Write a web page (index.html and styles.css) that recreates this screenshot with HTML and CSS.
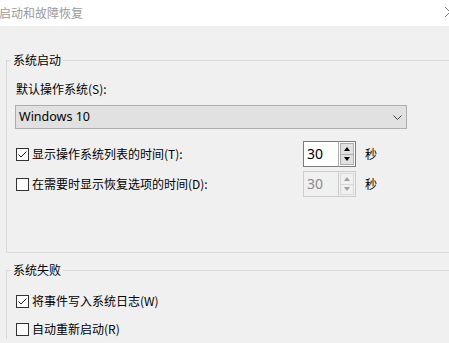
FILE: index.html
```html
<!DOCTYPE html>
<html lang="zh-CN">
<head>
<meta charset="utf-8">
<title>启动和故障恢复</title>
<link rel="stylesheet" href="styles.css">
</head>
<body>
<div class="window">
  <div class="titlebar">
    <span class="title">启动和故障恢复</span>
    <svg class="close" width="12" height="12" viewBox="0 0 12 12"><path d="M1 1L11 11M11 1L1 11" stroke="#7a7a7a" stroke-width="1" fill="none"/></svg>
  </div>
  <div class="main">
    <fieldset class="group group-start">
      <legend class="legend">系统启动</legend>
      <div class="group-body">
        <div class="field-label">默认操作系统(S):</div>
        <div class="select">
          <span class="select-text">Windows 10</span>
          <svg class="chevron" width="9" height="5" viewBox="0 0 9 5"><path d="M0.5 0.5L4.5 4.5L8.5 0.5" stroke="#444" stroke-width="1" fill="none"/></svg>
        </div>
        <div class="timer-grid">
          <label class="check">
            <span class="box"><svg width="11" height="11" viewBox="0 0 11 11"><path d="M1.5 5.5L4 8L9.5 2.5" stroke="#222" stroke-width="1" fill="none"/></svg></span>
            <span class="check-text">显示操作系统列表的时间(T):</span>
          </label>
          <div class="spin">
            <span class="spin-field">30</span>
            <span class="spin-btns">
              <span class="spin-btn"><span class="arrow-up"></span></span>
              <span class="spin-btn"><span class="arrow-down"></span></span>
            </span>
          </div>
          <span class="unit">秒</span>

          <label class="check">
            <span class="box"></span>
            <span class="check-text">在需要时显示恢复选项的时间(D):</span>
          </label>
          <div class="spin spin-disabled">
            <span class="spin-field">30</span>
            <span class="spin-btns">
              <span class="spin-btn"><span class="arrow-up"></span></span>
              <span class="spin-btn"><span class="arrow-down"></span></span>
            </span>
          </div>
          <span class="unit">秒</span>
        </div>
      </div>
    </fieldset>
    <fieldset class="group group-fail">
      <legend class="legend">系统失败</legend>
      <div class="group-body fail-body">
        <label class="check row">
          <span class="box"><svg width="11" height="11" viewBox="0 0 11 11"><path d="M1.5 5.5L4 8L9.5 2.5" stroke="#222" stroke-width="1" fill="none"/></svg></span>
          <span class="check-text">将事件写入系统日志(W)</span>
        </label>
        <label class="check row">
          <span class="box"></span>
          <span class="check-text">自动重新启动(R)</span>
        </label>
      </div>
    </fieldset>
  </div>
</div>
</body>
</html>
```
FILE: styles.css
```css
html, body {
  margin: 0;
  padding: 0;
}
body {
  width: 449px;
  height: 343px;
  overflow: hidden;
  background: #f0f0f0;
  font-family: "Noto Sans CJK SC", "Noto Sans", sans-serif;
  font-size: 12px;
  line-height: 16px;
  color: #000;
}
.window {
  width: 449px;
  height: 343px;
  overflow: hidden;
}
.titlebar {
  height: 26px;
  background: #fff;
  display: flex;
  align-items: center;
  justify-content: space-between;
}
.title {
  color: #9a9a9a;
  font-size: 12px;
  margin-left: -1px;
  margin-top: -1px;
}
.close {
  margin-right: -7px;
  margin-top: -3px;
  flex: none;
}
.main {
  padding: 26px 0 0 6px;
}
.group {
  margin: 0;
  padding: 0;
  min-width: 0;
  border: 1px solid #d9d9d9;
  border-right: none;
}
.legend {
  margin-left: 4px;
  padding: 0 2px;
  line-height: 16px;
}
.group-body {
  padding-left: 9px;
}
.group-start .group-body {
  padding-top: 13px;
  padding-bottom: 55px;
}
.group-fail {
  margin-top: 9px;
  border-bottom: none;
}
.field-label {
  height: 16px;
}
.select {
  margin-top: 8px;
  margin-left: -1px;
  width: 392px;
  height: 24px;
  box-sizing: border-box;
  border: 1px solid #adadad;
  background: #e1e1e1;
  display: flex;
  align-items: center;
  justify-content: space-between;
  padding: 0 4px 0 3px;
}
.select-text {
  font-family: "Noto Sans", sans-serif;
  font-size: 12.5px;
  color: #000;
}
.timer-grid {
  margin-top: 12px;
  display: grid;
  grid-template-columns: 278px 53px auto;
  grid-auto-rows: 26px;
  row-gap: 4px;
  column-gap: 9px;
  align-items: center;
}
.check {
  display: flex;
  align-items: center;
  gap: 3px;
}
.box {
  width: 13px;
  height: 13px;
  box-sizing: border-box;
  border: 1px solid #333;
  background: #fff;
  display: flex;
  align-items: center;
  justify-content: center;
  flex: none;
}
.box svg {
  display: block;
}
.check-text {
  white-space: nowrap;
}
.spin {
  display: flex;
  height: 26px;
  width: 53px;
  box-sizing: border-box;
}
.spin-field {
  width: 35px;
  box-sizing: border-box;
  border: 1px solid #7a7a7a;
  border-right: none;
  background: #fff;
  font-family: "Noto Sans", sans-serif;
  font-size: 14px;
  line-height: 22px;
  padding: 1px 0 0 3px;
}
.spin-btns {
  width: 18px;
  box-sizing: border-box;
  border: 1px solid #7a7a7a;
  border-left: 1px solid #adadad;
  padding: 1px;
  display: flex;
  flex-direction: column;
  background: #fff;
}
.spin-btn {
  flex: 1;
  background: #e1e1e1;
  border: 1px solid #adadad;
  display: flex;
  align-items: center;
  justify-content: center;
}
.spin-btn + .spin-btn {
  border-top: none;
}
.arrow-up {
  width: 0;
  height: 0;
  border-left: 3px solid transparent;
  border-right: 3px solid transparent;
  border-bottom: 4px solid #000;
}
.arrow-down {
  width: 0;
  height: 0;
  border-left: 3px solid transparent;
  border-right: 3px solid transparent;
  border-top: 4px solid #000;
}
.spin-disabled .spin-field {
  background: #f0f0f0;
  border-color: #cccccc;
  color: #8a8a8a;
}
.spin-disabled .spin-btns {
  border-color: #cccccc;
  background: #f0f0f0;
}
.spin-disabled .spin-btn {
  background: #f0f0f0;
  border-color: #d9d9d9;
}
.spin-disabled .arrow-up {
  border-bottom-color: #a0a0a0;
}
.spin-disabled .arrow-down {
  border-top-color: #a0a0a0;
}
.unit {
  line-height: 16px;
  margin-top: -1px;
}
.fail-body {
  padding-top: 13px;
  display: flex;
  flex-direction: column;
  gap: 8px;
}
.row {
  height: 20px;
}
```
